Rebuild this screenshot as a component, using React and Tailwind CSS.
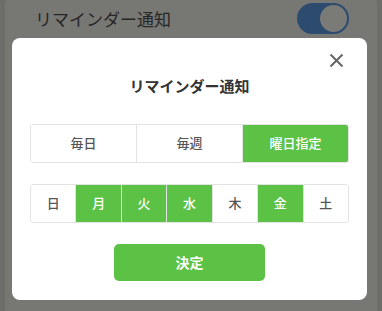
import React, { useState } from 'react';

const FONT = { fontFamily: '"Noto Sans CJK JP", "Noto Sans", sans-serif' };

const modes = ['毎日', '毎週', '曜日指定'];
const days = ['日', '月', '火', '水', '木', '金', '土'];

export default function App() {
  const [mode, setMode] = useState(2);
  const [picked, setPicked] = useState([1, 2, 3, 5]);

  const toggleDay = (i) =>
    setPicked(picked.includes(i) ? picked.filter((d) => d !== i) : [...picked, i]);

  return (
    <div className="relative w-[382px] h-[311px] overflow-hidden bg-[#6d6d6a]" style={FONT}>
      {/* page behind the overlay */}
      <div className="mx-[5px] -mt-[6px] h-[330px] rounded-[10px] bg-[#777774]">
        <div className="flex items-center justify-between pl-[30px] pr-[28px] pt-[9px]">
          <span className="text-[17px] text-[#262626]">リマインダー通知</span>
          <div className="flex h-[31px] w-[52px] items-center justify-end rounded-full bg-[#2c4b6f] pr-[2px]">
            <div className="h-[27px] w-[27px] rounded-full bg-[#7a7a77]" />
          </div>
        </div>
      </div>

      {/* modal */}
      <div className="absolute left-[12px] top-[38px] w-[355px] h-[262px] rounded-[8px] bg-white">
        <button className="absolute right-[23px] top-[15px] text-[#666]">
          <svg width="15" height="15" viewBox="0 0 15 15">
            <path d="M1.5 1.5 L13.5 13.5 M13.5 1.5 L1.5 13.5" stroke="currentColor" strokeWidth="2" />
          </svg>
        </button>

        <div className="pt-[37px] text-center text-[15px] font-bold text-[#333]">リマインダー通知</div>

        <div className="mx-[18px] mt-[26px] flex h-[39px] overflow-hidden rounded-[3px] border border-[#e3e3e3]">
          {modes.map((m, i) => (
            <button
              key={m}
              onClick={() => setMode(i)}
              className={`flex-1 text-[13px] font-medium ${i > 0 ? 'border-l border-[#e3e3e3]' : ''} ${
                mode === i ? 'bg-[#5cc245] text-white' : 'bg-white text-[#555]'
              }`}
            >
              {m}
            </button>
          ))}
        </div>

        <div className="mx-[18px] mt-[21px] flex h-[39px] overflow-hidden rounded-[3px] border border-[#e3e3e3]">
          {days.map((d, i) => (
            <button
              key={d}
              onClick={() => toggleDay(i)}
              className={`flex-1 text-[13px] font-medium ${i > 0 ? 'border-l border-[#e3e3e3]' : ''} ${
                picked.includes(i) ? 'bg-[#5cc245] text-white' : 'bg-white text-[#555]'
              }`}
            >
              {d}
            </button>
          ))}
        </div>

        <div className="mt-[21px] flex justify-center">
          <button className="h-[37px] w-[151px] rounded-[5px] bg-[#5cc245] text-[14px] font-bold text-white">
            決定
          </button>
        </div>
      </div>
    </div>
  );
}
